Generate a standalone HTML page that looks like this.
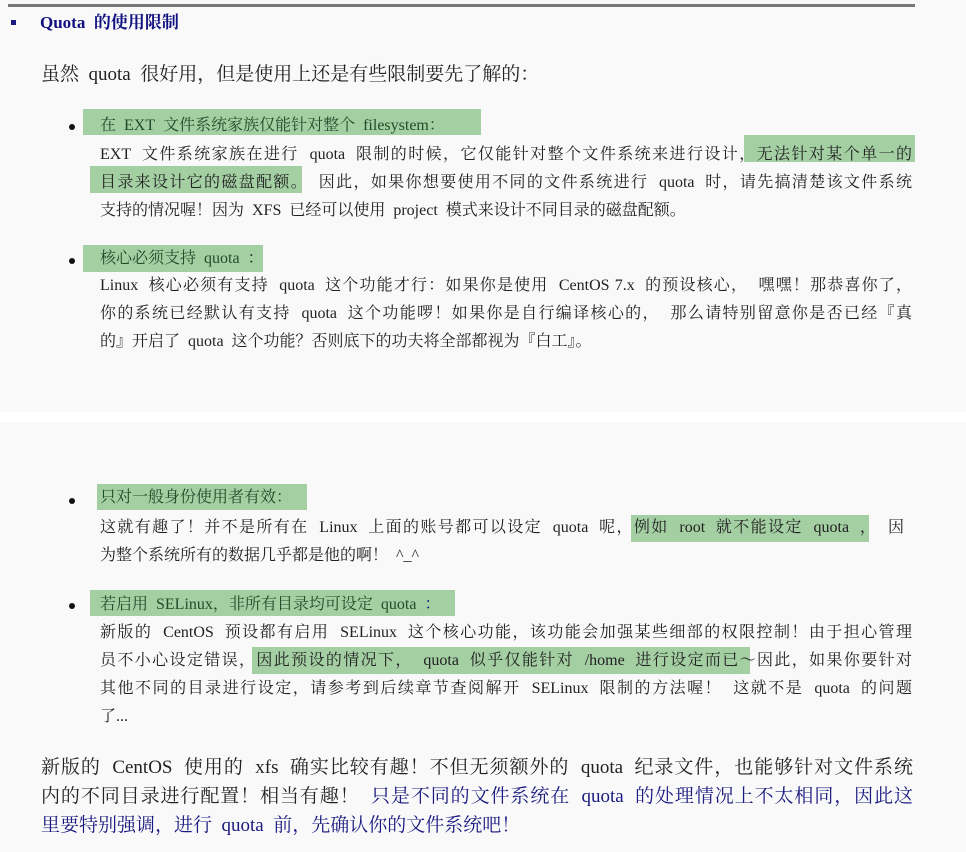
<!DOCTYPE html>
<html><head><meta charset="utf-8"><style>
body{margin:0;width:966px;height:852px;background:#f9f9f9;position:relative;overflow:hidden;font-family:"Liberation Serif","Noto Serif CJK SC","Noto Sans CJK SC",serif;color:#222}
.a{position:absolute;white-space:nowrap}
.j{position:absolute;white-space:nowrap;text-align:justify;text-align-last:justify;white-space:normal;overflow:visible;height:28px}
.s{font-size:16px;line-height:28px}
.b{font-size:19px;line-height:29px}
.h{position:absolute;background:#a3cfa3}
.dot{position:absolute;width:6px;height:6px;border-radius:50%;background:#111}
.nv{color:#1a1a80}
</style></head><body>
<div class="a" style="left:8px;top:4px;width:907px;height:3px;background:#777"></div>
<div class="a" style="left:11px;top:20px;width:5px;height:5px;background:#1a1a80"></div>
<div class="a" style="left:40px;top:11px;font-size:17px;line-height:24px;font-weight:bold;color:#101080">Quota&nbsp; 的使用限制</div>
<div class="a b" style="left:41px;top:60px">虽然&nbsp; quota&nbsp; 很好用，但是使用上还是有些限制要先了解的：</div>

<div class="h" style="left:83px;top:109px;width:398px;height:26px"></div>
<div class="dot" style="left:69px;top:124px"></div>
<div class="a s" style="left:100px;top:112px;color:#254a2a">在&nbsp; EXT&nbsp; 文件系统家族仅能针对整个&nbsp; filesystem：</div>
<div class="h" style="left:744px;top:135px;width:171px;height:27px"></div>
<div class="h" style="left:90px;top:166px;width:212px;height:27px"></div>
<div class="j s" style="left:100px;top:141px;width:812px">EXT&nbsp; 文件系统家族在进行&nbsp; quota&nbsp; 限制的时候，它仅能针对整个文件系统来进行设计，无法针对某个单一的</div>
<div class="j s" style="left:100px;top:169px;width:812px">目录来设计它的磁盘配额。&nbsp; 因此，如果你想要使用不同的文件系统进行&nbsp; quota&nbsp; 时，请先搞清楚该文件系统</div>
<div class="a s" style="left:100px;top:197px">支持的情况喔！因为&nbsp; XFS&nbsp; 已经可以使用&nbsp; project&nbsp; 模式来设计不同目录的磁盘配额。</div>

<div class="h" style="left:83px;top:245px;width:180px;height:27px"></div>
<div class="dot" style="left:69px;top:258px"></div>
<div class="a s" style="left:100px;top:245px"><span style="color:#254a2a">核心必须支持&nbsp; quota&nbsp;</span> ：</div>
<div class="j s" style="left:100px;top:272px;width:812px">Linux&nbsp; 核心必须有支持&nbsp; quota&nbsp; 这个功能才行：如果你是使用&nbsp; CentOS 7.x&nbsp; 的预设核心，&nbsp; 嘿嘿！那恭喜你了，</div>
<div class="j s" style="left:100px;top:300px;width:812px">你的系统已经默认有支持&nbsp; quota&nbsp; 这个功能啰！如果你是自行编译核心的，&nbsp; 那么请特别留意你是否已经『真</div>
<div class="a s" style="left:100px;top:328px">的』开启了&nbsp; quota&nbsp; 这个功能？否则底下的功夫将全部都视为『白工』。</div>

<div class="a" style="left:0;top:412px;width:966px;height:10px;background:#fff"></div>

<div class="h" style="left:97px;top:484px;width:210px;height:26px"></div>
<div class="dot" style="left:69px;top:498px"></div>
<div class="a s" style="left:100px;top:484px;color:#254a2a">只对一般身份使用者有效：</div>
<div class="h" style="left:631px;top:515px;width:238px;height:27px"></div>
<div class="j s" style="left:100px;top:514px;width:804px">这就有趣了！并不是所有在&nbsp; Linux&nbsp; 上面的账号都可以设定&nbsp; quota&nbsp; 呢，例如&nbsp; root&nbsp; 就不能设定&nbsp; quota&nbsp; ，&nbsp; 因</div>
<div class="a s" style="left:100px;top:542px">为整个系统所有的数据几乎都是他的啊！&nbsp; ^_^</div>

<div class="h" style="left:90px;top:590px;width:365px;height:26px"></div>
<div class="dot" style="left:69px;top:603px"></div>
<div class="a s" style="left:100px;top:591px"><span style="color:#254a2a">若启用&nbsp; SELinux，非所有目录均可设定&nbsp; quota&nbsp;</span> <span style="color:#101080">：</span></div>
<div class="h" style="left:252px;top:647px;width:498px;height:27px"></div>
<div class="j s" style="left:100px;top:619px;width:812px">新版的&nbsp; CentOS&nbsp; 预设都有启用&nbsp; SELinux&nbsp; 这个核心功能，该功能会加强某些细部的权限控制！由于担心管理</div>
<div class="j s" style="left:100px;top:647px;width:812px">员不小心设定错误，因此预设的情况下，&nbsp; quota&nbsp; 似乎仅能针对&nbsp; /home&nbsp; 进行设定而已～因此，如果你要针对</div>
<div class="j s" style="left:100px;top:675px;width:812px">其他不同的目录进行设定，请参考到后续章节查阅解开&nbsp; SELinux&nbsp; 限制的方法喔！&nbsp; 这就不是&nbsp; quota&nbsp; 的问题</div>
<div class="a s" style="left:100px;top:703px">了...</div>

<div class="j b" style="left:41px;top:753px;width:872px;height:29px">新版的&nbsp; CentOS&nbsp; 使用的&nbsp; xfs&nbsp; 确实比较有趣！不但无须额外的&nbsp; quota&nbsp; 纪录文件，也能够针对文件系统</div>
<div class="j b" style="left:41px;top:782px;width:872px;height:29px">内的不同目录进行配置！相当有趣！&nbsp; <span class="nv">只是不同的文件系统在&nbsp; quota&nbsp; 的处理情况上不太相同，因此这</span></div>
<div class="a b nv" style="left:41px;top:811px">里要特别强调，进行&nbsp; quota&nbsp; 前，先确认你的文件系统吧！</div>
</body></html>
